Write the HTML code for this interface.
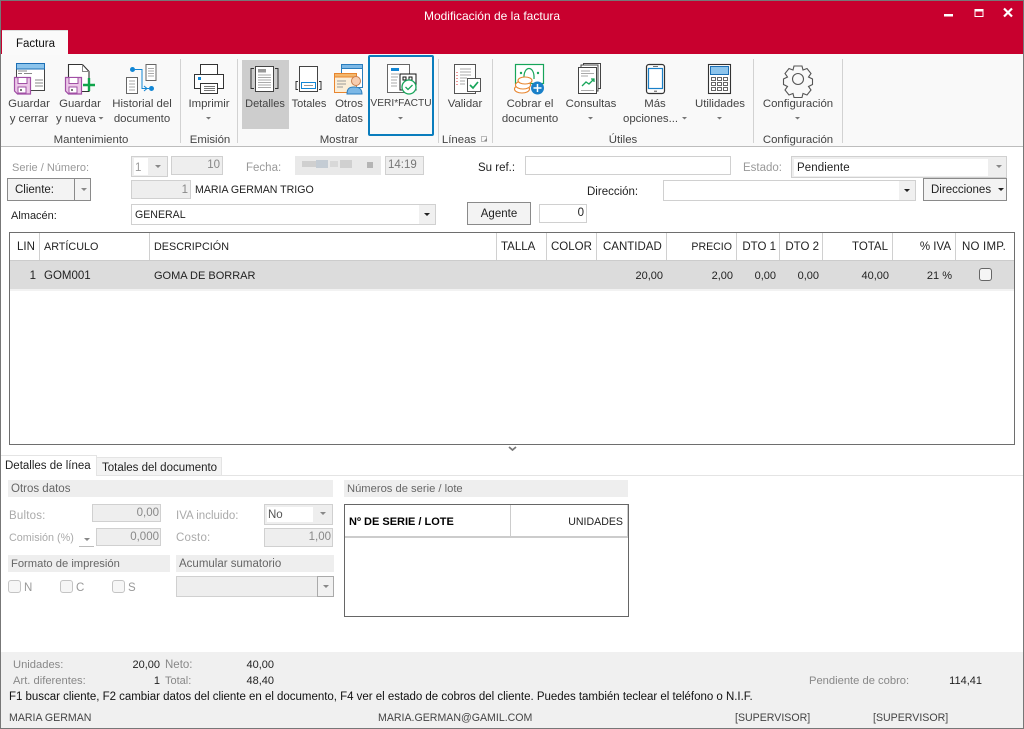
<!DOCTYPE html>
<html lang="es"><head><meta charset="utf-8"><title>Modificación de la factura</title>
<style>
html,body{margin:0;padding:0;background:#fff}
#p{position:relative;width:1024px;height:729px;overflow:hidden;background:#fff;font-family:"Liberation Sans",sans-serif;font-size:11.5px;color:#222}
#p div{position:absolute;box-sizing:border-box}
.t{white-space:nowrap;line-height:14px;height:14px;margin-top:1px}
.tb{white-space:nowrap}
.c{transform:translateX(-50%)}
.r{text-align:right}
.n{font-size:11px}
.u{font-size:10.6px}
.rb{color:#444;font-size:11.4px}
.g{color:#999}
.b{border:1px solid #d0d0d0;background:#fff}
.d{border:1px solid #d0d0d0;background:#eee}
.sec{background:#eee;height:17px;color:#666;line-height:19px;padding-left:3px}
.btn{border:1px solid #8a8a8a;background:#f3f3f3;line-height:23px}
.chk{width:13px;height:13px;border:1px solid #c4c4c4;border-radius:3px;background:#f6f6f6}
.vs{width:1px;background:#d0d0d0;top:233px;height:27px}
.sep{width:1px;background:#d2d2d2;top:59px;height:84px}
svg{position:absolute;left:0;top:0}
</style></head><body><div id="p">
<div style="left:0;top:0;width:1024px;height:54px;background:#c8002e"></div>
<div style="left:0;top:54px;width:1024px;height:92px;background:#f9f9f9"></div>
<div style="left:0;top:146px;width:1024px;height:1px;background:#bdbdbd"></div>
<div style="left:2px;top:30px;width:66px;height:25px;background:#fafafa;border-top:1px solid #ddd"></div>
<div class="t" style="left:16px;top:36px;color:#111;font-size:11.5px">Factura</div>
<div class="t c" style="left:492px;top:8px;color:#fff;font-size:12px">Modificación de la factura</div>
<div style="left:242px;top:60px;width:47px;height:69px;background:#cdcdcd"></div>
<div style="left:368px;top:55px;width:66px;height:81px;border:2px solid #0a7dbd;border-radius:2px"></div>
<div class="sep" style="left:180px"></div><div class="sep" style="left:237px"></div><div class="sep" style="left:438px"></div><div class="sep" style="left:492px"></div><div class="sep" style="left:753px"></div><div class="sep" style="left:842px"></div>

<svg width="1024" height="729" viewBox="0 0 1024 729" fill="none">
<!-- window controls -->
<rect x="944" y="14" width="9" height="2.5" fill="#fff"/>
<rect x="975" y="9.5" width="8" height="7" stroke="#fff" stroke-width="1"/><rect x="975" y="9" width="8.5" height="2.5" fill="#fff"/>
<path d="M1004 8.5l8 8M1012 8.5l-8 8" stroke="#fff" stroke-width="2.2"/>
<!-- Guardar y cerrar -->
<rect x="16.5" y="63.5" width="28" height="27" fill="#fff" stroke="#444"/><rect x="16.5" y="63.5" width="28" height="5.5" fill="#8cc4ec" stroke="#1c6fb5"/>
<path d="M18 71h9M18 73.500h4M24 73.500h8M35 80h8M35 83h8M35 86h8" stroke="#888"/>
<path d="M14.5 77.500h16v16.500h-13l-3-3z" fill="#ecc8e8" stroke="#a14fa5" stroke-width="1.2"/><rect x="18" y="77.500" width="9" height="6" fill="#fff" stroke="#a14fa5"/><rect x="18" y="87" width="8" height="6" fill="#fff" stroke="#a14fa5"/><rect x="20" y="89" width="2" height="2" fill="#777"/>
<!-- Guardar y nueva -->
<path d="M68.500 64.500h14l6.500 7v20h-20.500z" fill="#fff" stroke="#333" stroke-width="1.100"/><path d="M82.500 64.500v7h6.500" stroke="#888"/>
<path d="M65.500 77.500h16v16.500h-13l-3-3z" fill="#ecc8e8" stroke="#a14fa5" stroke-width="1.2"/><rect x="69" y="77.500" width="9" height="6" fill="#fff" stroke="#a14fa5"/><rect x="69" y="87" width="8" height="6" fill="#fff" stroke="#a14fa5"/><rect x="71" y="89" width="2" height="2" fill="#777"/>
<path d="M89 78v13M83 85h12" stroke="#0fa44a" stroke-width="2.400"/>
<!-- Historial -->
<rect x="146" y="64.500" width="10" height="16" fill="#fff" stroke="#666"/><path d="M148 68.500h6M148 71h6M148 73.500h6M148 76h6" stroke="#aaa"/>
<rect x="126.500" y="77.500" width="11" height="16" fill="#fff" stroke="#666"/><path d="M129 81h6M129 84h6M129 87h6M129 90h6" stroke="#aaa"/>
<circle cx="132.500" cy="69.500" r="2.500" fill="#1186d5"/><circle cx="151.500" cy="88.500" r="2.500" fill="#1186d5"/>
<path d="M135 69.500h7v19h7M144 86l3 2.500-3 2.500" stroke="#1186d5"/>
<!-- Imprimir -->
<rect x="200.500" y="64.500" width="17" height="11" fill="#fff" stroke="#333"/><rect x="194.500" y="74.500" width="29" height="14" fill="#fff" stroke="#333"/><rect x="198" y="77" width="3" height="3" fill="#1186d5"/><rect x="200.500" y="83.500" width="17" height="10" fill="#fff" stroke="#333"/><path d="M204 86.500h11M204 88.500h11M204 90.500h11" stroke="#777"/>
<!-- Detalles -->
<rect x="255.500" y="66.500" width="18" height="25" fill="#fff" stroke="#444"/><rect x="258" y="69" width="8" height="3.500" fill="#999"/><path d="M258 75h13M258 77.500h13M258 80h13M258 82.500h13M258 85h13M258 87.500h13" stroke="#aaa"/>
<path d="M254 68.500h-3v20h3M275 68.500h3v20h-3" stroke="#333"/>
<!-- Totales -->
<rect x="299.500" y="66.500" width="18" height="25" fill="#fff" stroke="#444"/><rect x="301.500" y="82.500" width="14" height="6" fill="#fff" stroke="#1186d5"/><path d="M304 85.500h9" stroke="#999"/>
<path d="M298 81.500h-2v8h2M319 81.500h2v8h-2" stroke="#333"/>
<!-- Otros -->
<rect x="341.500" y="64.500" width="21" height="23" fill="#fff" stroke="#2a7dbd"/><rect x="341.500" y="64.500" width="21" height="4" fill="#7cb8e6" stroke="#2a7dbd"/>
<rect x="334.500" y="73.500" width="22" height="19" fill="#fbeed8" stroke="#e8852e"/><rect x="334.500" y="73.500" width="22" height="3.500" fill="#f3b76c" stroke="#e8852e"/><path d="M337 81h9M337 84h9M337 87h6" stroke="#999"/>
<path d="M347 94c0-6 3-7 7-7s8 1 8 7z" fill="#7cb8e6" stroke="#2a7dbd"/><circle cx="356" cy="81" r="4.500" fill="#f7cdb0" stroke="#c97f50"/>
<!-- VeriFactu -->
<rect x="387.500" y="64.500" width="22" height="28" fill="#fff" stroke="#666"/><rect x="391" y="68" width="8" height="3" fill="#1186d5"/><path d="M391 74h8M391 77h7M391 80h6M391 83h6M391 86h6" stroke="#aaa"/>
<rect x="400" y="74" width="16" height="16" fill="#fff" stroke="#111"/><path d="M403 77h3v3h-3zM409 77h3v3h-3zM403 84h2M407 80h1" stroke="#111"/>
<circle cx="409" cy="87" r="7" fill="#fff" stroke="#17a55a" stroke-width="1.300"/><path d="M405.500 87l2.500 2.500 4.500-4.500" stroke="#17a55a" stroke-width="1.300"/>
<!-- Validar -->
<rect x="454.500" y="64.500" width="21" height="29" fill="#fff" stroke="#555"/><path d="M460 69h11M460 72h11M460 75h11M460 78h7M460 81h5M460 84h5" stroke="#aaa"/><path d="M457 72v1M457 75v1M457 78v1M457 81v1M457 84v1" stroke="#d33"/>
<rect x="467.500" y="78.500" width="13" height="13" fill="#fff" stroke="#555"/><path d="M470 85l3 3 5-6" stroke="#17a55a" stroke-width="1.700"/>
<!-- Cobrar -->
<rect x="515.500" y="64.500" width="28" height="19" fill="#fff" stroke="#17a55a" stroke-width="1.200"/><path d="M524 79c-1-14 11-14 10 0" stroke="#17a55a" stroke-width="1.200"/><circle cx="521" cy="73" r="1.200" fill="#17a55a"/><circle cx="538" cy="73" r="1.200" fill="#17a55a"/>
<ellipse cx="522" cy="89" rx="7.500" ry="4" fill="#fff" stroke="#e8852e" stroke-width="1.100"/><ellipse cx="523" cy="85" rx="7.500" ry="4" fill="#fff" stroke="#e8852e" stroke-width="1.100"/><ellipse cx="525" cy="80.500" rx="7" ry="3.500" fill="#fff" stroke="#e8852e" stroke-width="1.100"/>
<circle cx="537.500" cy="88" r="6.500" fill="#1a80c8"/><path d="M537.500 84v8M533.500 88h8" stroke="#fff" stroke-width="1.500"/>
<!-- Consultas -->
<rect x="583.500" y="63.500" width="17" height="25" fill="#fff" stroke="#444"/><rect x="581" y="65" width="17" height="26" fill="#fff" stroke="#444"/><rect x="578.500" y="67.500" width="18" height="26" fill="#fff" stroke="#444"/>
<path d="M581 71h9M581 73.500h13M581 76h7M581 90.500h13" stroke="#aaa"/><path d="M582 86l4-4 3 2 5-5M591 79h3v3" stroke="#17a55a" stroke-width="1.300"/>
<!-- Mas -->
<rect x="646.500" y="64.500" width="18" height="29" rx="2.500" fill="#fff" stroke="#333" stroke-width="1.200"/><rect x="648.500" y="68.500" width="14" height="20" fill="#fff" stroke="#1a80c8" stroke-width="1.200"/><path d="M653 66.500h5" stroke="#777"/><path d="M654 91.200h3" stroke="#555"/>
<!-- Utilidades -->
<rect x="708.500" y="64.500" width="22" height="29" fill="#fff" stroke="#333" stroke-width="1.100"/><rect x="710.500" y="66.500" width="18" height="8" fill="#8cc4ec" stroke="#1c6fb5"/>
<path d="M711.500 77.500h4v3h-4zM717.500 77.500h4v3h-4zM723.500 77.500h4v3h-4zM711.500 82.500h4v3h-4zM717.500 82.500h4v3h-4zM723.500 82.500h4v3h-4zM711.500 87.500h4v3h-4zM717.500 87.500h4v3h-4zM723.500 87.500h4v3h-4z" stroke="#666"/>
<!-- Gear -->
<path d="M794 66h8l1 4 4-1.500 4 5-2.500 3.500 4 2v5.500l-4 2 2.500 3.500-4 5-4-1.500-1 4h-8l-1-4-4 1.500-4-5 2.500-3.500-4-2v-5.500l4-2-2.500-3.500 4-5 4 1.500z" fill="#f9f9f9" stroke="#555" stroke-width="1.100"/><circle cx="798" cy="79" r="5.500" stroke="#555" stroke-width="1.100"/>
<!-- dropdown arrows ribbon -->
<path d="M98.500 117l2.500 2.500 2.500-2.500zM206 117l2.500 2.500 2.500-2.500zM398 117l2.500 2.500 2.500-2.500zM588 117l2.500 2.500 2.500-2.500zM682 117l2.500 2.500 2.500-2.500zM717 117l2.500 2.500 2.500-2.500zM795 117l2.500 2.500 2.500-2.500z" fill="#777"/>
<path d="M481.500 136.500h5v5h-5z" stroke="#bbb"/><path d="M484 141h3v-3z" fill="#888"/>
<!-- chevron -->
<path d="M509 447l3.500 3 3.500-3" stroke="#777" stroke-width="1.800"/>
</svg>

<div class="t rb c" style="left:29px;top:96px">Guardar</div><div class="t rb c" style="left:29px;top:111px">y cerrar</div>
<div class="t rb c" style="left:80px;top:96px">Guardar</div><div class="t rb" style="left:56px;top:111px">y nueva</div>
<div class="t rb c" style="left:142px;top:96px">Historial del</div><div class="t rb c" style="left:142px;top:111px">documento</div>
<div class="t rb c" style="left:209px;top:96px">Imprimir</div>
<div class="t rb c" style="left:265px;top:96px;font-size:11px">Detalles</div><div class="t rb c" style="left:309px;top:96px;font-size:11px">Totales</div>
<div class="t rb c" style="left:349px;top:96px">Otros</div><div class="t rb c" style="left:349px;top:111px">datos</div>
<div class="t rb c" style="left:401px;top:96px;font-size:10.2px">VERI*FACTU</div>
<div class="t rb c" style="left:465px;top:96px">Validar</div>
<div class="t rb c" style="left:530px;top:96px">Cobrar el</div><div class="t rb c" style="left:530px;top:111px">documento</div>
<div class="t rb c" style="left:591px;top:96px">Consultas</div>
<div class="t rb c" style="left:655px;top:96px">Más</div><div class="t rb" style="left:623px;top:111px">opciones...</div>
<div class="t rb c" style="left:720px;top:96px">Utilidades</div><div class="t rb c" style="left:798px;top:96px">Configuración</div>
<div class="t rb c" style="left:91px;top:132px">Mantenimiento</div><div class="t rb c" style="left:210px;top:132px">Emisión</div><div class="t rb c" style="left:339px;top:132px">Mostrar</div><div class="t rb c" style="left:459px;top:132px">Líneas</div><div class="t rb c" style="left:623px;top:132px">Útiles</div><div class="t rb c" style="left:798px;top:132px">Configuración</div>

<!-- Form -->
<div class="t g" style="left:12px;top:160px;font-size:11px">Serie / Número:</div>
<div class="d" style="left:131px;top:156px;width:37px;height:21px"></div><div style="left:134px;top:158px;width:14px;height:17px;background:#fff"></div><div class="t g" style="left:135px;top:160px">1</div>
<div class="d tb r" style="left:171px;top:156px;width:52px;height:19px;padding-right:2px;line-height:17px;color:#888">10</div>
<div class="t g" style="left:246px;top:160px">Fecha:</div>
<div style="left:295px;top:156px;width:86px;height:19px;background:#e9e9e9"></div>
<div style="left:302px;top:161px;width:14px;height:6px;background:#cfcfcf"></div><div style="left:316px;top:160px;width:12px;height:8px;background:#c4ccd4"></div><div style="left:330px;top:161px;width:8px;height:6px;background:#d8d8d8"></div><div style="left:340px;top:160px;width:12px;height:8px;background:#d0d0d0"></div><div style="left:367px;top:162px;width:6px;height:6px;background:#b5b5b5"></div>
<div class="d tb" style="left:385px;top:156px;width:39px;height:19px;padding-left:2px;line-height:17px;color:#777">14:19</div>
<div class="t" style="left:478px;top:160px;color:#222">Su ref.:</div>
<div class="b" style="left:525px;top:156px;width:206px;height:19px"></div>
<div class="t g" style="left:743px;top:160px">Estado:</div>
<div class="d" style="left:791px;top:156px;width:216px;height:22px"></div><div class="t" style="left:794px;top:158px;width:194px;height:17px;background:#fff;padding-left:3px;line-height:18px;letter-spacing:.1px">Pendiente</div>
<div class="btn" style="left:7px;top:178px;width:84px;height:23px;padding-left:7px;color:#222">Cliente:</div><div style="left:74px;top:178px;width:1px;height:23px;background:#8a8a8a"></div>
<div class="d tb r" style="left:131px;top:180px;width:60px;height:19px;padding-right:2px;line-height:18px;color:#888">1</div>
<div class="t u" style="left:195px;top:182px;color:#222">MARIA GERMAN TRIGO</div>
<div class="t" style="left:587px;top:184px">Dirección:</div>
<div class="b" style="left:663px;top:180px;width:253px;height:21px"></div><div style="left:899px;top:181px;width:16px;height:19px;background:#f0f0f0"></div>
<div class="btn" style="left:923px;top:178px;width:84px;height:23px;padding-left:7px;color:#222">Direcciones</div>
<div class="t" style="left:11px;top:208px;font-size:11px">Almacén:</div>
<div class="b tb u" style="left:131px;top:204px;width:305px;height:21px;padding-left:3px;line-height:21px">GENERAL</div><div style="left:419px;top:205px;width:16px;height:19px;background:#f0f0f0"></div>
<div class="btn" style="left:467px;top:202px;width:64px;height:23px;text-align:center;color:#222">Agente</div>
<div class="b tb r" style="left:539px;top:204px;width:48px;height:19px;padding-right:2px;line-height:17px">0</div>

<!-- Grid -->
<div style="left:9px;top:232px;width:1006px;height:213px;border:1px solid #6e6e6e;background:#fff"></div>
<div style="left:10px;top:260px;width:1004px;height:1px;background:#ccc"></div>
<div style="left:10px;top:261px;width:1004px;height:28px;background:#dcdcdc"></div>
<div style="left:10px;top:289px;width:1004px;height:2px;background:#f2f2f2"></div>
<div class="vs" style="left:39px"></div><div class="vs" style="left:149px"></div><div class="vs" style="left:496px"></div><div class="vs" style="left:546px"></div><div class="vs" style="left:596px"></div><div class="vs" style="left:666px"></div><div class="vs" style="left:736px"></div><div class="vs" style="left:779px"></div><div class="vs" style="left:822px"></div><div class="vs" style="left:892px"></div><div class="vs" style="left:955px"></div>
<div class="t" style="left:17px;top:239px">LIN</div><div class="t" style="left:44px;top:239px;font-size:10.8px">ARTÍCULO</div><div class="t" style="left:154px;top:239px;font-size:10.8px">DESCRIPCIÓN</div><div class="t" style="left:501px;top:239px">TALLA</div><div class="t" style="left:551px;top:239px">COLOR</div><div class="t" style="left:603px;top:239px">CANTIDAD</div>
<div class="t r u" style="left:670px;top:239px;width:62px">PRECIO</div><div class="t r" style="left:740px;top:239px;width:36px">DTO 1</div><div class="t r" style="left:783px;top:239px;width:36px">DTO 2</div><div class="t r" style="left:830px;top:239px;width:58px">TOTAL</div><div class="t r" style="left:896px;top:239px;width:55px">% IVA</div><div class="t" style="left:962px;top:239px;letter-spacing:.2px">NO IMP.</div>
<div class="t r" style="left:15px;top:268px;width:21px">1</div><div class="t" style="left:44px;top:268px">GOM001</div><div class="t" style="left:154px;top:268px;font-size:11px">GOMA DE BORRAR</div>
<div class="t r n" style="left:610px;top:268px;width:53px">20,00</div><div class="t r n" style="left:680px;top:268px;width:53px">2,00</div><div class="t r n" style="left:730px;top:268px;width:46px">0,00</div><div class="t r n" style="left:773px;top:268px;width:46px">0,00</div><div class="t r n" style="left:830px;top:268px;width:59px">40,00</div><div class="t r n" style="left:900px;top:268px;width:52px">21 %</div>
<div class="chk" style="left:979px;top:268px;border-color:#666;background:#f5f5f5"></div>

<!-- Tabs -->
<div style="left:97px;top:475px;width:926px;height:1px;background:#e4e4e4"></div>
<div style="left:1px;top:455px;width:96px;height:21px;background:#fff;border:1px solid #e4e4e4;border-width:1px 1px 0 0"></div>
<div style="left:97px;top:457px;width:125px;height:18px;background:#f3f3f3;border:1px solid #e4e4e4;border-width:1px 1px 0 0"></div>
<div class="t" style="left:5px;top:458px">Detalles de línea</div><div class="t" style="left:102px;top:460px">Totales del documento</div>
<div class="sec" style="left:8px;top:480px;width:325px">Otros datos</div>
<div class="sec" style="left:344px;top:480px;width:284px;font-size:11.2px">Números de serie / lote</div>
<div class="t" style="left:9px;top:508px;color:#aaa;letter-spacing:.2px">Bultos:</div>
<div class="d tb r" style="left:92px;top:504px;width:69px;height:18px;padding-right:1px;line-height:16px;color:#888">0,00</div>
<div class="t" style="left:176px;top:508px;color:#aaa">IVA incluido:</div>
<div class="d" style="left:264px;top:504px;width:69px;height:21px"></div><div class="t" style="left:267px;top:506px;width:46px;height:15px;background:#fff;padding-left:1px;line-height:16px;color:#555">No</div>
<div class="t" style="left:9px;top:530px;color:#aaa;font-size:10.8px">Comisión (%)</div>
<div style="left:79px;top:546px;width:15px;height:1px;background:#bbb"></div>
<div class="d tb r" style="left:96px;top:528px;width:65px;height:18px;padding-right:1px;line-height:16px;color:#888">0,000</div>
<div class="t" style="left:176px;top:530px;color:#aaa;letter-spacing:.2px">Costo:</div>
<div class="d tb r" style="left:264px;top:528px;width:69px;height:19px;padding-right:1px;line-height:16px;color:#888">1,00</div>
<div class="sec" style="left:8px;top:555px;width:162px;font-size:11.2px">Formato de impresión</div>
<div class="sec" style="left:176px;top:555px;width:158px">Acumular sumatorio</div>
<div class="chk" style="left:8px;top:580px"></div><div class="t" style="left:24px;top:580px;color:#999">N</div>
<div class="chk" style="left:60px;top:580px"></div><div class="t" style="left:76px;top:580px;color:#999">C</div>
<div class="chk" style="left:112px;top:580px"></div><div class="t" style="left:128px;top:580px;color:#999">S</div>
<div class="d" style="left:176px;top:576px;width:158px;height:21px"></div><div style="left:317px;top:576px;width:17px;height:21px;background:#f1f1f1;border:1px solid #aaa"></div>
<div style="left:344px;top:504px;width:285px;height:113px;border:1px solid #666;background:#fff"></div>
<div style="left:345px;top:536px;width:283px;height:2px;background:#ccc"></div><div style="left:510px;top:505px;width:1px;height:31px;background:#ccc"></div><div style="left:627px;top:505px;width:1px;height:31px;background:#ccc"></div>
<div class="t" style="left:349px;top:514px;font-weight:bold;color:#000;font-size:11px">Nº DE SERIE / LOTE</div><div class="t r u" style="left:520px;top:514px;width:103px">UNIDADES</div>

<!-- Footer -->
<div style="left:0;top:652px;width:1024px;height:77px;background:#f0f0f0"></div>
<div class="t" style="left:13px;top:657px;color:#888;font-size:11.2px">Unidades:</div><div class="t r n" style="left:110px;top:657px;width:50px">20,00</div><div class="t" style="left:165px;top:657px;color:#888">Neto:</div><div class="t r n" style="left:224px;top:657px;width:50px">40,00</div>
<div class="t" style="left:13px;top:673px;color:#888;font-size:11.2px">Art. diferentes:</div><div class="t r n" style="left:110px;top:673px;width:50px">1</div><div class="t" style="left:165px;top:673px;color:#888;font-size:11px">Total:</div><div class="t r n" style="left:224px;top:673px;width:50px">48,40</div>
<div class="t" style="left:809px;top:673px;color:#888;font-size:11.2px">Pendiente de cobro:</div><div class="t r n" style="left:932px;top:673px;width:50px">114,41</div>
<div class="t" style="left:9px;top:689px;color:#111;letter-spacing:-.02px">F1 buscar cliente, F2 cambiar datos del cliente en el documento, F4 ver el estado de cobros del cliente. Puedes también teclear el teléfono o N.I.F.</div>
<div class="t u" style="left:9px;top:710px;color:#444">MARIA GERMAN</div><div class="t u" style="left:378px;top:710px;color:#444">MARIA.GERMAN@GAMIL.COM</div><div class="t u" style="left:735px;top:710px;color:#444">[SUPERVISOR]</div><div class="t u" style="left:873px;top:710px;color:#444">[SUPERVISOR]</div>

<svg width="1024" height="729" viewBox="0 0 1024 729" fill="none">
<path d="M155 165l3 3 3-3zM996 165l3 3 3-3zM81 188l3 3 3-3zM320 512l3 3 3-3zM84 538l3 3 3-3zM323 585l3 3 3-3z" fill="#888"/>
<path d="M904 189l3 3 3-3zM424 213l3 3 3-3zM998 188h6l-3 3z" fill="#222"/>
<path d="M.5 0v729M1023.500 0v729M0 728.500h1024M0 .5h1024" stroke="#777"/>
</svg>
</div></body></html>
